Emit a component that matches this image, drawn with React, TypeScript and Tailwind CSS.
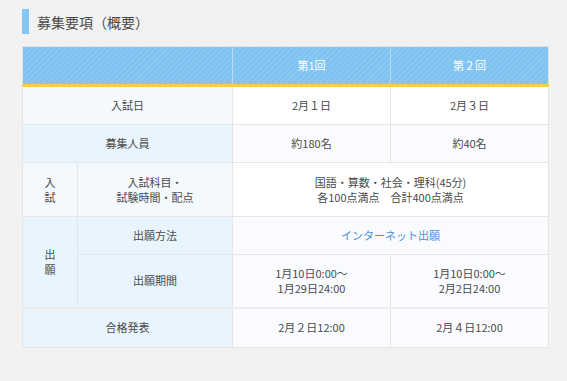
const font = "font-['Noto_Sans_CJK_JP','Noto_Sans',sans-serif]";

const labelLight = "bg-[#f4f9fe]";
const labelBlue = "bg-[#e9f5fe]";
const dataWhite = "bg-white";
const dataTint = "bg-[#f9fbfe]";
const cell = "border border-[#e6e6e6] text-center align-middle";

export default function App() {
  return (
    <div className={`min-h-screen w-full bg-[#f2f2f2] pl-[22px] pt-[9px] ${font} text-[#4a4a4a]`}>
      <div className="flex items-center">
        <div className="h-[25px] w-[7px] bg-[#84c7f5]" />
        <h2 className="ml-[8px] text-[14px] leading-none text-[#4a4a4a]">募集要項（概要）</h2>
      </div>

      <table className="mt-[12px] w-[526px] table-fixed border-collapse border border-[#e3e3e3] text-[11px] leading-[15px]">
        <colgroup>
          <col className="w-[55px]" />
          <col className="w-[155px]" />
          <col className="w-[158px]" />
          <col className="w-[158px]" />
        </colgroup>
        <thead>
          <tr className="h-[39px] border-b-[3px] border-b-[#f0d24a] bg-[repeating-linear-gradient(135deg,#7ec2ef_0px,#7ec2ef_2px,#89c8f2_2px,#89c8f2_4px)] text-white">
            <th colSpan={2} className="border-r border-r-[#b9dcf5] font-normal" />
            <th className="border-r border-r-[#b9dcf5] font-normal">第1回</th>
            <th className="font-normal">第２回</th>
          </tr>
        </thead>
        <tbody>
          <tr className="h-[39px]">
            <td colSpan={2} className={`${cell} ${labelLight}`}>入試日</td>
            <td className={`${cell} ${dataWhite}`}>2月１日</td>
            <td className={`${cell} ${dataWhite}`}>2月３日</td>
          </tr>
          <tr className="h-[38px]">
            <td colSpan={2} className={`${cell} ${labelBlue}`}>募集人員</td>
            <td className={`${cell} ${dataTint}`}>約180名</td>
            <td className={`${cell} ${dataTint}`}>約40名</td>
          </tr>
          <tr className="h-[54px]">
            <td className={`${cell} ${labelLight}`}>
              入<br />試
            </td>
            <td className={`${cell} ${labelLight}`}>
              入試科目・
              <br />
              試験時間・配点
            </td>
            <td colSpan={2} className={`${cell} ${dataWhite}`}>
              国語・算数・社会・理科(45分)
              <br />
              各100点満点　合計400点満点
            </td>
          </tr>
          <tr className="h-[38px]">
            <td rowSpan={2} className={`${cell} ${labelBlue}`}>
              出<br />願
            </td>
            <td className={`${cell} ${labelBlue}`}>出願方法</td>
            <td colSpan={2} className={`${cell} ${dataTint} text-[#4a8fd6]`}>
              インターネット出願
            </td>
          </tr>
          <tr className="h-[53px]">
            <td className={`${cell} ${labelBlue}`}>出願期間</td>
            <td className={`${cell} ${dataTint}`}>
              1月10日0:00～
              <br />
              1月29日24:00
            </td>
            <td className={`${cell} ${dataTint}`}>
              1月10日0:00～
              <br />
              2月2日24:00
            </td>
          </tr>
          <tr className="h-[40px] border-t-2 border-t-[#ececec]">
            <td colSpan={2} className={`${cell} ${labelBlue}`}>合格発表</td>
            <td className={`${cell} ${dataTint}`}>2月２日12:00</td>
            <td className={`${cell} ${dataTint}`}>2月４日12:00</td>
          </tr>
        </tbody>
      </table>
    </div>
  );
}
